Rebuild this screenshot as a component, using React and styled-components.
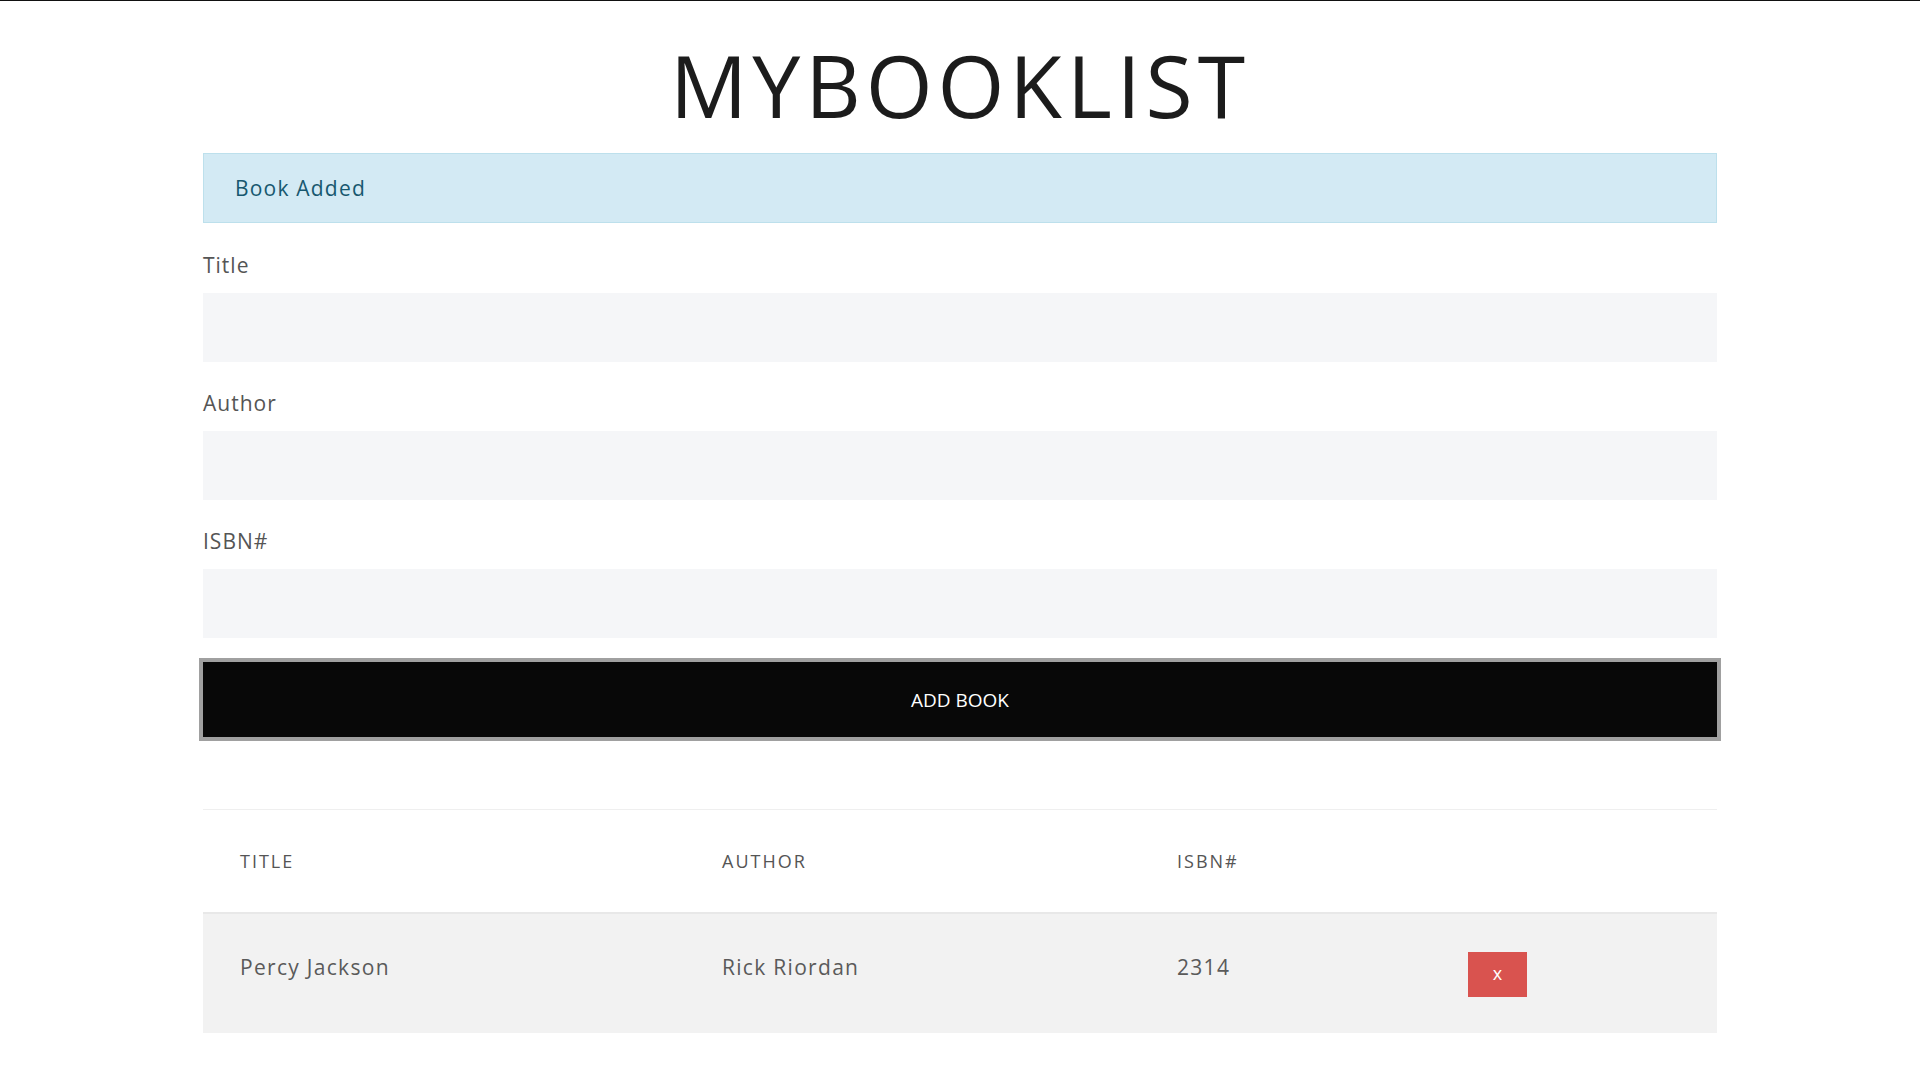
import styled, { createGlobalStyle } from "styled-components"

const GlobalStyle = createGlobalStyle`
    * { box-sizing: border-box; }
    body {
        margin: 0;
        background: #fff;
        font-family: "Open Sans", "Liberation Sans", sans-serif;
        border-top: 1px solid #111;
    }
`

const Container = styled.div`
    width: 1514px;
    margin: 0 auto;
    padding-bottom: 40px;
`

const Title = styled.h1`
    margin: 41px 0 25px;
    font-size: 86px;
    line-height: 86px;
    font-weight: 400;
    letter-spacing: 4.9px;
    color: #1c1c1c;
    text-align: center;
`

const Alert = styled.div`
    height: 70px;
    display: flex;
    align-items: center;
    padding: 0 31px;
    background-color: #d3eaf4;
    border: 1px solid #bde0ec;
    color: #17586f;
    font-size: 21px;
    letter-spacing: 1.2px;
`

const Form = styled.form`
    margin-top: 26px;
    display: flex;
    flex-direction: column;
`

const Field = styled.div`
    display: flex;
    flex-direction: column;
    margin-bottom: 25px;
`

const Label = styled.label`
    padding-top: 2px;
    font-size: 21px;
    line-height: 29px;
    letter-spacing: 1px;
    color: #555;
    margin-bottom: 13px;
`

const Input = styled.input`
    height: 69px;
    border: none;
    background-color: #f5f6f8;
    padding: 0 20px;
    font-family: inherit;
    font-size: 20px;
    outline: none;
`

const Button = styled.button`
    margin-top: -1px;
    height: 75px;
    width: 100%;
    border: none;
    background-color: #080808;
    color: #fff;
    font-family: inherit;
    font-size: 19px;
    box-shadow: 0 0 0 4px #a0a0a0;
    cursor: pointer;
`

const Table = styled.div`
    margin-top: 72px;
    display: grid;
    grid-template-columns: 482px 455px 291px 1fr;
`

const HeadCell = styled.div`
    height: 105px;
    display: flex;
    align-items: center;
    padding: 0 37px;
    border-top: 1px solid #efefef;
    border-bottom: 2px solid #e8e8e8;
    font-size: 18px;
    font-weight: 500;
    letter-spacing: 2px;
    color: #555;
`

const Cell = styled.div`
    height: 119px;
    padding: 39px 37px 0;
    background-color: #f2f2f2;
    font-size: 21px;
    line-height: 29px;
    letter-spacing: 1.3px;
    color: #5a5a5a;
`

const DeleteButton = styled.button`
    margin-top: -1px;
    width: 59px;
    height: 45px;
    border: none;
    background-color: #d9534f;
    color: #fff;
    font-family: inherit;
    font-size: 18px;
    line-height: 1;
    padding: 0 0 4px;
    cursor: pointer;
`

const books = [{ title: "Percy Jackson", author: "Rick Riordan", isbn: "2314" }]

const App = () => {
    return (
        <Container>
            <GlobalStyle />
            <Title>MYBOOKLIST</Title>
            <Alert>Book Added</Alert>
            <Form onSubmit={(e) => e.preventDefault()}>
                <Field>
                    <Label>Title</Label>
                    <Input type="text" />
                </Field>
                <Field>
                    <Label>Author</Label>
                    <Input type="text" />
                </Field>
                <Field>
                    <Label>ISBN#</Label>
                    <Input type="text" />
                </Field>
                <Button type="submit">ADD BOOK</Button>
            </Form>
            <Table>
                <HeadCell>TITLE</HeadCell>
                <HeadCell>AUTHOR</HeadCell>
                <HeadCell>ISBN#</HeadCell>
                <HeadCell />
                {books.map((book) => (
                    <>
                        <Cell>{book.title}</Cell>
                        <Cell>{book.author}</Cell>
                        <Cell>{book.isbn}</Cell>
                        <Cell>
                            <DeleteButton>x</DeleteButton>
                        </Cell>
                    </>
                ))}
            </Table>
        </Container>
    )
}

export default App
